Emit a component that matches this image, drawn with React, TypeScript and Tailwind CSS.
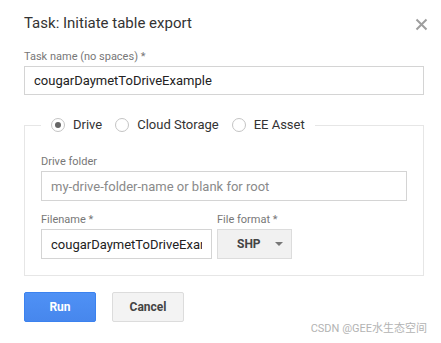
import { useState } from "react";

type Destination = "drive" | "gcs" | "asset";

export default function App() {
  const [destination, setDestination] = useState<Destination>("drive");
  const [taskName, setTaskName] = useState("cougarDaymetToDriveExample");
  const [folder, setFolder] = useState("");
  const [fileName, setFileName] = useState("cougarDaymetToDriveExample");

  return (
    <div className="relative flex h-[343px] w-[441px] flex-col overflow-hidden bg-white font-['Roboto','Liberation_Sans',sans-serif]">
      <div className="flex-1 pl-6 pr-[17px] pt-[11px]">
        <div className="flex h-[24px] items-center justify-between">
          <h1 className="text-[15px] leading-[24px] text-[#333]">Task: Initiate table export</h1>
          <button type="button" aria-label="Close" className="mr-[-4px] mt-[2px] text-[#9e9e9e]">
            <svg width="13" height="13" viewBox="0 0 13 13" aria-hidden="true">
              <path d="M1.5 1.5 11.5 11.5M11.5 1.5 1.5 11.5" stroke="currentColor" strokeWidth="2" />
            </svg>
          </button>
        </div>

        <Field label="Task name (no spaces) *" className="mt-[15px]">
          <input
            className="h-[29px] w-full border border-[#d4d4d4] px-[9px] text-[13px] text-[#222] outline-none"
            value={taskName}
            onChange={(event) => setTaskName(event.target.value)}
          />
        </Field>

        <fieldset className="mt-[20px] border border-[#e6e6e6] px-4 pb-4">
          <legend className="flex items-center gap-[13px] px-[10px] text-[13px] text-[#333]">
            <Radio label="Drive" checked={destination === "drive"} onSelect={() => setDestination("drive")} />
            <Radio label="Cloud Storage" checked={destination === "gcs"} onSelect={() => setDestination("gcs")} />
            <Radio label="EE Asset" checked={destination === "asset"} onSelect={() => setDestination("asset")} />
          </legend>

          <Field label="Drive folder" className="mt-[20px]">
            <input
              className="h-[30px] w-full border border-[#d4d4d4] px-[9px] text-[13px] text-[#222] outline-none placeholder:text-[#8a8a8a]"
              placeholder="my-drive-folder-name or blank for root"
              value={folder}
              onChange={(event) => setFolder(event.target.value)}
            />
          </Field>

          <div className="mt-[12px] flex gap-[5px]">
            <Field label="Filename *" className="w-[171px]">
              <input
                className="h-[30px] w-full border border-[#d4d4d4] px-[9px] text-[13px] text-[#222] outline-none"
                value={fileName}
                onChange={(event) => setFileName(event.target.value)}
              />
            </Field>
            <Field label="File format *" className="w-[75px]">
              <button
                type="button"
                className="flex h-[30px] w-full items-center border border-[#dcdcdc] bg-[#f1f1f1] pl-[19px] pr-[8px] text-[12px] font-bold text-[#444]"
              >
                <span className="flex-1 text-left">SHP</span>
                <svg width="8" height="4" viewBox="0 0 8 4" aria-hidden="true">
                  <path d="M0 0h8L4 4z" fill="#777" />
                </svg>
              </button>
            </Field>
          </div>
        </fieldset>

        <div className="mt-[16px] flex gap-4">
          <button
            type="button"
            className="h-[30px] w-[72px] rounded-[2px] border border-[#3b82ef] bg-[#4d8ff3] bg-gradient-to-b from-[#4f91f5] to-[#4787ed] text-[12px] font-bold text-white"
          >
            Run
          </button>
          <button
            type="button"
            className="h-[30px] w-[72px] rounded-[2px] border border-[#dcdcdc] bg-[#f3f3f3] text-[12px] font-bold text-[#444]"
          >
            Cancel
          </button>
        </div>
      </div>

      <p className="pb-[7px] pr-[14px] text-right font-['Roboto','Noto_Sans_CJK_SC',sans-serif] text-[11px] leading-[14px] text-[#b3b3b3]">
        CSDN @GEE水生态空间
      </p>
      <div className="h-[2px] bg-[#fce6fc]" />
    </div>
  );
}

function Field({ label, className, children }: { label: string; className?: string; children: React.ReactNode }) {
  return (
    <label className={`block ${className ?? ""}`}>
      <span className="block text-[11px] leading-[14px] text-[#777]">{label}</span>
      <span className="mt-[2px] block">{children}</span>
    </label>
  );
}

function Radio({ label, checked, onSelect }: { label: string; checked: boolean; onSelect: () => void }) {
  return (
    <button type="button" onClick={onSelect} className="flex h-[20px] items-center gap-[8px]">
      <span className="grid h-[14px] w-[14px] place-items-center rounded-full border border-[#c4c4c4] bg-white">
        {checked ? <span className="h-[6px] w-[6px] rounded-full bg-[#666]" /> : null}
      </span>
      <span>{label}</span>
    </button>
  );
}
